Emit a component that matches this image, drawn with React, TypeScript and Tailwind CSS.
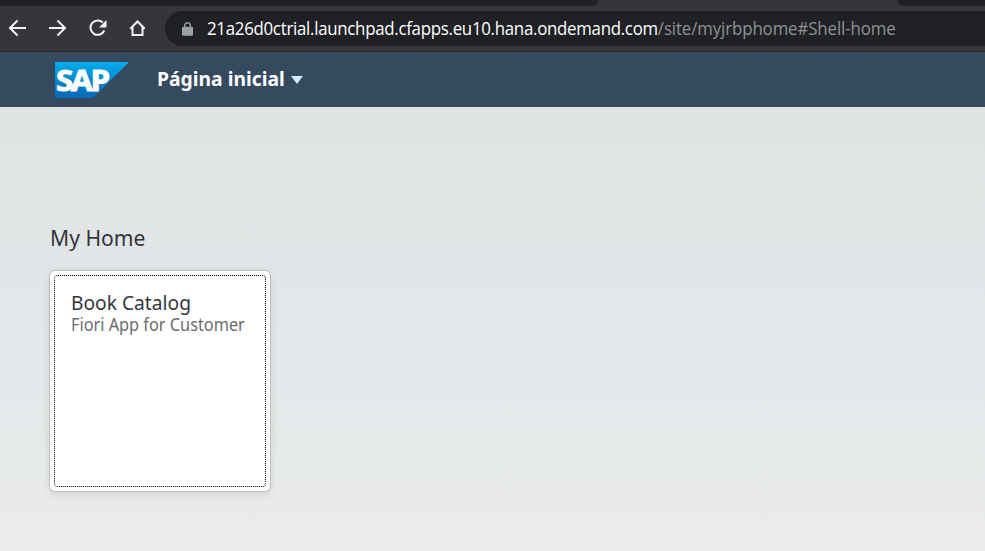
function BrowserBar() {
  return (
    <div className="h-[52px] shrink-0 border-b border-[#28292c] bg-[#35363a]">
      <div className="flex h-[6px] justify-between">
        <div className="w-[598px] rounded-br-[7px] bg-[#202124]" />
        <div className="w-[88px] rounded-bl-[9px] bg-[#202124]" />
      </div>
      <div className="flex pt-[5px]">
        <svg className="h-[35px] w-[165px] shrink-0" viewBox="0 0 165 35" fill="none" stroke="#f1f3f4" strokeWidth="2">
          <path d="M26 17H10.500M17.500 9.500L10 17L17.500 24.500" />
          <path d="M49 17H64.500M57.500 9.500L65 17L57.500 24.500" />
          <path d="M102.800 11.500A7.200 7.200 0 1 0 104.300 19.500" />
          <path d="M106.500 9V16.500H99Z" fill="#f1f3f4" stroke="none" />
          <path d="M130.300 17.700L137.500 10.500L144.700 17.700M132.500 16V24H142.500V16" />
        </svg>
        <div className="flex h-[35px] flex-1 items-center rounded-l-full bg-[#202124] pl-[17px]">
          <svg className="h-[14px] w-[11px] shrink-0" viewBox="0 0 11 14">
            <path d="M2.700 6V3.500a2.800 2.800 0 0 1 5.600 0V6" fill="none" stroke="#9aa0a6" strokeWidth="1.400" />
            <rect y="4.800" width="11" height="9" rx="1.200" fill="#9aa0a6" />
          </svg>
          <div className="mb-[2px] ml-[14px] w-[700px] origin-left scale-x-[0.936] whitespace-nowrap font-['Open_Sans',sans-serif] text-[18px] leading-[24px] tracking-[-0.300px] text-white">
            21a26d0ctrial.launchpad.cfapps.eu10.hana.ondemand.com<span className="tracking-[-0.120px] text-[#8f9194]">/site/myjrbphome#Shell-home</span>
          </div>
        </div>
      </div>
    </div>
  );
}

function SapLogo() {
  return (
    <svg className="h-[36px] w-[74px] overflow-visible" viewBox="0 0 74 36" role="img" aria-label="SAP">
      <defs>
        <linearGradient id="sap" x1="0" y1="0" x2="0" y2="1">
          <stop offset="0" stopColor="#00aeef" />
          <stop offset="0.500" stopColor="#0887cf" />
          <stop offset="1" stopColor="#0768b8" />
        </linearGradient>
      </defs>
      <path d="M0 0H74L38 36H0Z" fill="url(#sap)" />
      <text x="1" y="28.500" fill="#fff" stroke="#fff" strokeWidth="1" fontFamily="Open Sans, sans-serif" fontWeight="700" fontSize="29" textLength="52" lengthAdjust="spacingAndGlyphs" letterSpacing="-2">SAP</text>
    </svg>
  );
}

export default function App() {
  return (
    <div className="flex h-[551px] w-[985px] flex-col overflow-hidden">
      <BrowserBar />
      <header className="flex h-[55px] shrink-0 items-center bg-[#354a5f] pl-[55px]">
        <SapLogo />
        <button className="ml-[28px] flex items-center font-['Noto_Sans',sans-serif] text-[20px] font-bold leading-[24px] text-white">
          <span className="mb-[2px] w-[134px] origin-left scale-x-[0.965] whitespace-nowrap text-left">Página inicial</span>
          <svg className="h-[8px] w-[12px]" viewBox="0 0 12 8">
            <path d="M0 0H12L6 8Z" fill="#d1e8ff" />
          </svg>
        </button>
      </header>
      <main className="flex-1 bg-linear-to-b from-[#dfe3e4] to-[#e9ebed] pl-[50px] pt-[114px] font-['Noto_Sans',sans-serif] text-[#32363a]">
        <h1 className="mb-[18px] h-[32px] w-[220px] origin-left scale-x-[0.960] whitespace-nowrap text-[22px] leading-[32px]">My Home</h1>
        <div className="h-[220px] w-[220px] rounded-[5px] bg-white p-[4px] shadow-[0_0_0_1px_#bfc2c4,0_2px_8px_rgba(0,0,0,0.140)]">
          <div className="h-[212px] w-[212px] rounded-[4px] border border-dotted border-black pl-[16px] pt-[15px]">
            <div className="w-[190px] origin-left scale-x-[0.960] whitespace-nowrap text-[20px] leading-[24px]">Book Catalog</div>
            <div className="w-[190px] origin-left scale-x-[0.905] whitespace-nowrap text-[18px] leading-[18px] text-[#6a6d70]">Fiori App for Customer</div>
          </div>
        </div>
      </main>
    </div>
  );
}
